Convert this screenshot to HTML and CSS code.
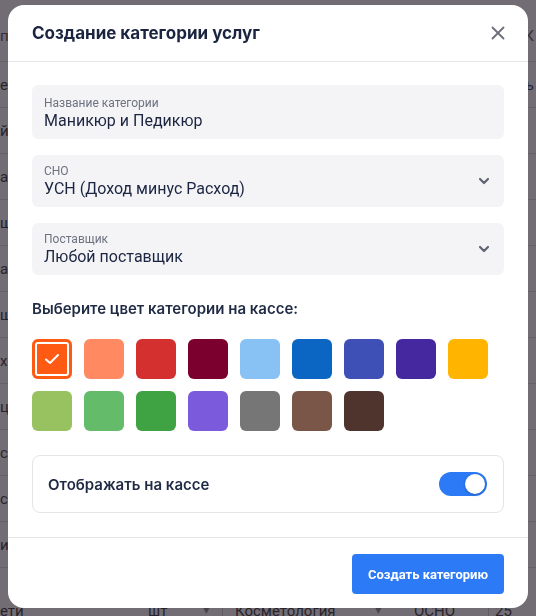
FILE: index.html
```html
<!DOCTYPE html>
<html lang="ru">
<head>
    <meta charset="UTF-8">
    <meta name="viewport" content="width=device-width, initial-scale=1">
    <title>Категории услуг</title>
    <link rel="stylesheet" href="styles.css">
</head>

<body>
    <!-- Таблица услуг под модальным окном -->
    <div class="page">
        <div class="table-head">
            <span class="cell-name">по</span>
            <span class="cell-right">К</span>
        </div>
        <div class="row"><span class="cell-name">ен</span><span class="cell-right">ль</span></div>
        <div class="row"><span class="cell-name">й</span></div>
        <div class="row"><span class="cell-name">а</span></div>
        <div class="row"><span class="cell-name">щи</span></div>
        <div class="row"><span class="cell-name">а</span></div>
        <div class="row"><span class="cell-name">щи</span></div>
        <div class="row"><span class="cell-name">хн</span></div>
        <div class="row"><span class="cell-name">ци</span></div>
        <div class="row"><span class="cell-name">ск</span></div>
        <div class="row"><span class="cell-name">с</span></div>
        <div class="row"><span class="cell-name">иц</span></div>
        <div class="row row-last">
            <span class="cell-name">ети</span>
            <span class="cell-unit">шт <i class="caret">▾</i></span>
            <span class="cell-cat">Косметология <i class="caret">▾</i></span>
            <span class="cell-tax">ОСНО</span>
            <span class="cell-qty">25</span>
        </div>
    </div>

    <div class="overlay">
        <div class="modal">
            <div class="modal-header">
                <h1>Создание категории услуг</h1>
                <button class="close-btn" aria-label="Закрыть">
                    <svg width="14" height="14" viewBox="0 0 14 14">
                        <path d="M1.5 1.5 L12.5 12.5 M12.5 1.5 L1.5 12.5" stroke="#6b6e78" stroke-width="1.8" stroke-linecap="round"/>
                    </svg>
                </button>
            </div>

            <div class="modal-body">
                <div class="field field-input">
                    <div class="field-label">Название категории</div>
                    <div class="field-value">Маникюр и Педикюр</div>
                </div>

                <div class="field field-select">
                    <div>
                        <div class="field-label">СНО</div>
                        <div class="field-value">УСН (Доход минус Расход)</div>
                    </div>
                    <svg class="chevron" width="12" height="8" viewBox="0 0 12 8">
                        <path d="M2 2 L6 6 L10 2" fill="none" stroke="#5f6370" stroke-width="2.2" stroke-linecap="round" stroke-linejoin="round"/>
                    </svg>
                </div>

                <div class="field field-select">
                    <div>
                        <div class="field-label">Поставщик</div>
                        <div class="field-value">Любой поставщик</div>
                    </div>
                    <svg class="chevron" width="12" height="8" viewBox="0 0 12 8">
                        <path d="M2 2 L6 6 L10 2" fill="none" stroke="#5f6370" stroke-width="2.2" stroke-linecap="round" stroke-linejoin="round"/>
                    </svg>
                </div>

                <h2 class="colors-title">Выберите цвет категории на кассе:</h2>

                <div class="colors">
                    <div class="swatch selected" style="background: #ff5a14;">
                        <svg width="16" height="12" viewBox="0 0 16 12">
                            <path d="M2 6.5 L6 10 L14 2" fill="none" stroke="#fff" stroke-width="2" stroke-linecap="round" stroke-linejoin="round"/>
                        </svg>
                    </div>
                    <div class="swatch" style="background: #ff8a61;"></div>
                    <div class="swatch" style="background: #d3302f;"></div>
                    <div class="swatch" style="background: #7b002d;"></div>
                    <div class="swatch" style="background: #88c1f3;"></div>
                    <div class="swatch" style="background: #0b66c3;"></div>
                    <div class="swatch" style="background: #3e4fb6;"></div>
                    <div class="swatch" style="background: #4527a0;"></div>
                    <div class="swatch" style="background: #ffb400;"></div>
                    <div class="swatch" style="background: #98c160;"></div>
                    <div class="swatch" style="background: #64bc6b;"></div>
                    <div class="swatch" style="background: #3fa243;"></div>
                    <div class="swatch" style="background: #7b5bdc;"></div>
                    <div class="swatch" style="background: #767676;"></div>
                    <div class="swatch" style="background: #7a5649;"></div>
                    <div class="swatch" style="background: #4f342e;"></div>
                </div>

                <div class="toggle-card">
                    <span>Отображать на кассе</span>
                    <div class="toggle on"><div class="knob"></div></div>
                </div>
            </div>

            <div class="modal-footer">
                <button class="primary-btn">Создать категорию</button>
            </div>
        </div>
    </div>
</body>
</html>
```

FILE: styles.css
```css
* {
    box-sizing: border-box;
}

body {
    margin: 0;
    font-family: Roboto, "Noto Sans", sans-serif;
    background: #fff;
    color: #1b2540;
    overflow: hidden;
}

/* page under the dialog */
.page {
    width: 536px;
    height: 616px;
}

.table-head,
.row {
    display: flex;
    align-items: center;
    height: 46px;
    border-bottom: 1px solid #ddd;
    font-size: 15px;
    color: #333;
}

.table-head {
    height: 62px;
    padding-top: 10px;
    color: #555;
}

.cell-name {
    width: 140px;
    flex-shrink: 0;
}

.cell-right {
    margin-left: auto;
    padding-right: 2px;
}

.row-last {
    height: 40px;
    margin-top: 23px;
    border-bottom: none;
}

.cell-unit {
    width: 82px;
    flex-shrink: 0;
    padding: 0 12px 0 8px;
    display: flex;
    justify-content: space-between;
}

.cell-cat {
    width: 178px;
    flex-shrink: 0;
    border-left: 1px solid #ccc;
    padding: 0 18px 0 12px;
    display: flex;
    justify-content: space-between;
}

.cell-tax {
    width: 88px;
    flex-shrink: 0;
    padding-left: 14px;
}

.cell-qty {
    border-left: 1px solid #ccc;
    padding-left: 6px;
}

.caret {
    font-style: normal;
    color: #888;
    font-size: 13px;
}

/* dialog */
.overlay {
    position: fixed;
    inset: 0;
    background: rgba(34, 26, 38, 0.64);
    padding: 5px 8px;
}

.modal {
    width: 520px;
    background: #fff;
    border-radius: 16px;
    overflow: hidden;
}

.modal-header {
    height: 57px;
    padding: 0 24px;
    display: flex;
    align-items: center;
    justify-content: space-between;
    border-bottom: 1px solid #e7e7eb;
}

.modal-header h1 {
    margin: 0;
    font-family: Inter, Roboto, sans-serif;
    font-size: 17px;
    font-weight: 700;
    color: #1b2540;
}

.close-btn {
    background: none;
    border: none;
    padding: 0;
    margin-right: -1px;
    display: flex;
    cursor: pointer;
}

.modal-body {
    padding: 23px 24px 24px;
}

.field {
    background: #f4f4f7;
    border-radius: 6px;
    padding: 8px 12px;
    margin-bottom: 16px;
}

.field-input {
    padding-top: 10px;
}

.field-select {
    display: flex;
    align-items: center;
    justify-content: space-between;
}

.chevron {
    margin-right: 2px;
}

.field-label {
    font-size: 12px;
    line-height: 16px;
    color: #6e7180;
}

.field-value {
    font-size: 16px;
    line-height: 20px;
    color: #1b2540;
}

.colors-title {
    margin: 24px 0 20px;
    font-family: Inter, Roboto, sans-serif;
    font-size: 15px;
    line-height: 20px;
    font-weight: 600;
    color: #1f2a44;
}

.colors {
    display: grid;
    grid-template-columns: repeat(9, 40px);
    gap: 12px;
}

.swatch {
    width: 40px;
    height: 40px;
    border-radius: 6px;
    display: flex;
    align-items: center;
    justify-content: center;
    cursor: pointer;
}

.swatch.selected {
    box-shadow: inset 0 0 0 3px #ff5a14, inset 0 0 0 5px #fff;
}

.toggle-card {
    margin-top: 24px;
    height: 58px;
    border: 1px solid #e4e4e9;
    border-radius: 8px;
    padding: 0 16px 0 15px;
    display: flex;
    align-items: center;
    justify-content: space-between;
    font-family: Inter, Roboto, sans-serif;
    font-size: 15px;
    font-weight: 600;
    color: #1f2a44;
}

.toggle {
    width: 48px;
    height: 24px;
    border-radius: 12px;
    background: #cfd3dc;
    position: relative;
}

.toggle.on {
    background: #2c7af5;
}

.knob {
    position: absolute;
    top: 2px;
    left: 2px;
    width: 20px;
    height: 20px;
    border-radius: 50%;
    background: #fff;
    box-shadow: 0 1px 3px rgba(0,0,0,0.25);
}

.toggle.on .knob {
    left: 26px;
}

.modal-footer {
    border-top: 1px solid #e7e7eb;
    padding: 16px 24px 14px;
    display: flex;
    justify-content: flex-end;
}

.primary-btn {
    width: 152px;
    height: 40px;
    background: #2c7af5;
    color: #fff;
    border: none;
    border-radius: 4px;
    font-family: inherit;
    font-size: 13px;
    font-weight: 700;
    cursor: pointer;
}
```
